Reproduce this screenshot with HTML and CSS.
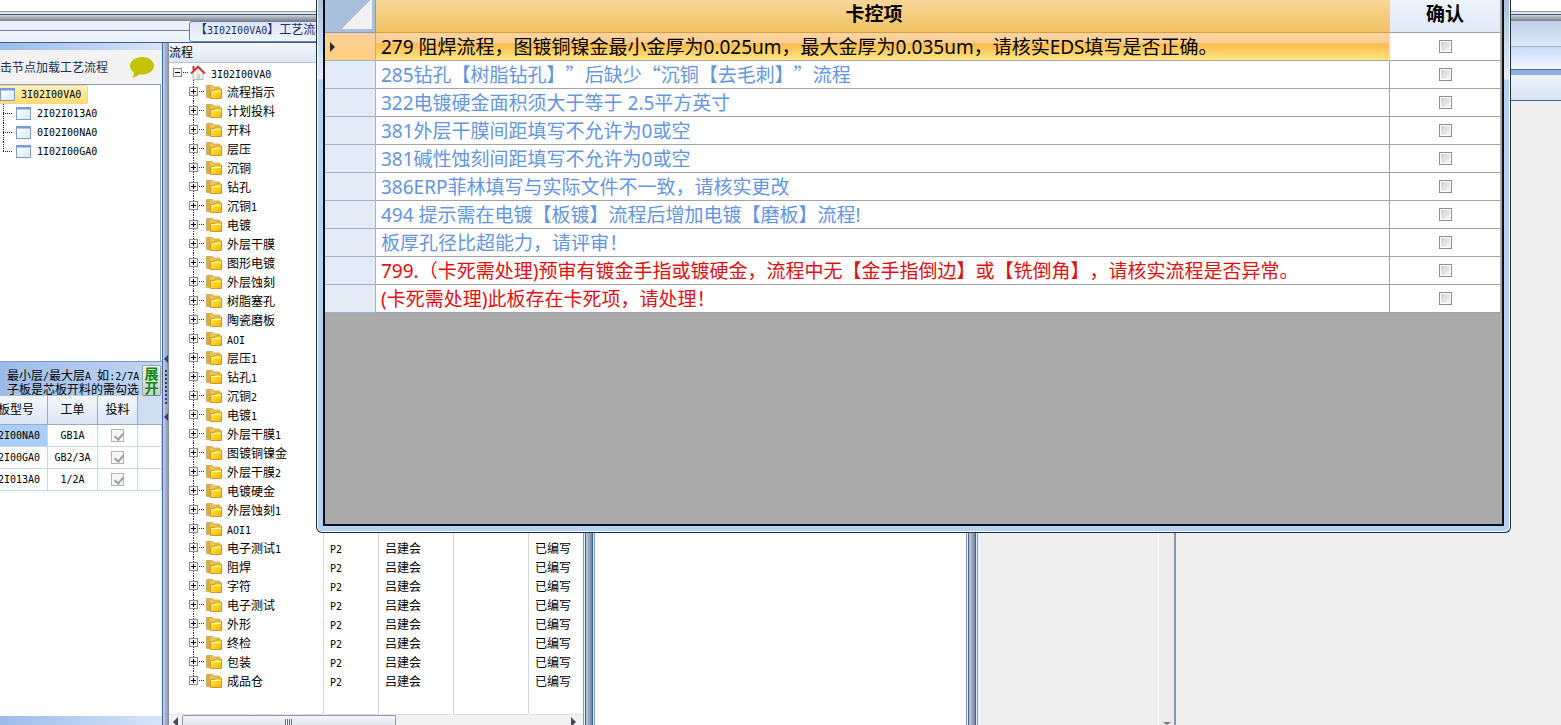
FILE: index.html
```html
<!DOCTYPE html>
<html lang="zh-CN">
<head>
    <meta charset="UTF-8">
    <meta name="viewport" content="width=device-width, initial-scale=1.0">
    <title>工艺流程</title>
    <link rel="stylesheet" href="styles.css">
</head>
<body>
    <svg class="sprites" aria-hidden="true">
        <defs>
            <linearGradient id="gold" x1="0" y1="0" x2="1" y2="1">
                <stop offset="0" stop-color="#fff04a"/>
                <stop offset="1" stop-color="#ffb400"/>
            </linearGradient>
            <linearGradient id="glass" x1="0" y1="0" x2="1" y2="1">
                <stop offset="0" stop-color="#ffffff"/>
                <stop offset="1" stop-color="#d8e8fa"/>
            </linearGradient>
        </defs>
        <symbol id="folder" viewBox="0 0 16 15">
            <path d="M.5 13.500V1.500h6l1 1.500h6V5" fill="#eec54c" stroke="#d0b060"/>
            <path d="M1 2h3v12H1z" fill="#d8ad45"/>
            <path d="M4.500 14.500v-8h4l1-1.500h6v9.500z" fill="url(#gold)" stroke="#c79a35"/>
            <path d="M5.500 7.500h9.500" stroke="#fff6b0"/>
        </symbol>
        <symbol id="window" viewBox="0 0 15 13">
            <rect x=".5" y=".5" width="14" height="12" fill="url(#glass)" stroke="#7d9dc8"/>
            <path d="M1 1h13v1.500H1z" fill="#6f9edb"/>
        </symbol>
        <symbol id="home" viewBox="0 0 16 15">
            <path d="M3 7l5-5 5 5v7.500H3z" fill="#f1f1f1" stroke="#b9b9b9"/>
            <path d="M7 9.500h3V14H7z" fill="#d0d0d8"/>
            <path d="M2.500 1h2v4h-2z" fill="#c03a3a"/>
            <path d="M1 8.500L8 1.800l7 6.700" fill="none" stroke="#d2383f" stroke-width="2.200"/>
        </symbol>
    </svg>

    <div class="app">
        <div class="title-bar"></div>
        <div class="workspace">
            <div class="main">
                <div class="tabs">
                    <a class="tab" href="#flow">【<span class="mono">3I02I00VA0</span>】工艺流程</a>
                </div>
                <div class="panels">
                    <div class="left">
                        <div class="strip"></div>
                        <div class="hint">
                            <span>击节点加载工艺流程</span>
                            <svg class="bubble" viewBox="0 0 24 21">
                                <path d="M12 0C5 0 0 4 0 9c0 3 1.500 5 4 6.500C4 18 3 19.500 2 20.500 5 20.500 8 19 9 17.500h3c7 0 12-4 12-8.700S19 0 12 0z" fill="#c4c300"/>
                            </svg>
                        </div>
                        <div class="boards">
                            <div class="board selected"><svg class="win"><use href="#window"/></svg><span class="mono">3I02I00VA0</span></div>
                            <div class="board child"><svg class="win"><use href="#window"/></svg><span class="mono">2I02I013A0</span></div>
                            <div class="board child"><svg class="win"><use href="#window"/></svg><span class="mono">0I02I00NA0</span></div>
                            <div class="board child last"><svg class="win"><use href="#window"/></svg><span class="mono">1I02I00GA0</span></div>
                        </div>
                        <div class="layer-head">
                            <p>最小层<span class="mono">/</span>最大层<span class="mono">A </span>如<span class="mono">:2/7A</span><br>子板是芯板开料的需勾选</p>
                            <button class="expand" type="button">展开</button>
                        </div>
                        <table class="orders">
                            <thead>
                                <tr><th class="c-model">板型号</th><th class="c-order">工单</th><th class="c-feed">投料</th><th></th></tr>
                            </thead>
                            <tbody>
                                <tr><td class="model current">2I00NA0</td><td>GB1A</td><td><input type="checkbox" class="tick" aria-label="投料 GB1A" checked disabled></td><td></td></tr>
                                <tr><td class="model">2I00GA0</td><td>GB2/3A</td><td><input type="checkbox" class="tick" aria-label="投料 GB2/3A" checked disabled></td><td></td></tr>
                                <tr><td class="model">2I013A0</td><td>1/2A</td><td><input type="checkbox" class="tick" aria-label="投料 1/2A" checked disabled></td><td></td></tr>
                            </tbody>
                        </table>
                        <div class="left-fill"></div>
                        <div class="strip foot"></div>
                    </div>

                    <div class="splitter grip">
                        <span class="arrow"></span>
                        <span class="dots"></span>
                        <span class="arrow"></span>
                    </div>

                    <div class="flow" id="flow">
                        <table class="steps">
                            <thead>
                                <tr><th class="c-name">流程</th><th class="c-ver"></th><th class="c-user"></th><th class="c-user"></th><th></th></tr>
                            </thead>
                            <tbody id="steps"></tbody>
                        </table>
                        <div class="hscroll">
                            <span class="tri-left"></span>
                            <span class="thumb"></span>
                            <span class="tri-right"></span>
                        </div>
                    </div>

                    <div class="splitter wide"></div>
                    <div class="detail"></div>
                    <div class="splitter wide"></div>
                    <div class="props"></div>
                    <div class="vscroll"><span class="tri-down"></span></div>
                </div>
            </div>
            <div class="right">
                <div class="band band-a"></div>
                <div class="band band-b"></div>
                <div class="band band-c"></div>
                <div class="band band-d"></div>
            </div>
        </div>
    </div>

    <div class="dialog">
        <div class="sheet">
            <table class="checks">
                <thead>
                    <tr><th class="corner"></th><th class="item">卡控项</th><th class="ok">确认</th></tr>
                </thead>
                <tbody>
                    <tr class="active"><td class="row-head"><span class="pointer"></span></td><td>279 阻焊流程，图镀铜镍金最小金厚为0.025um，最大金厚为0.035um，请核实EDS填写是否正确。</td><td class="ok"><input type="checkbox" class="box" aria-label="确认 279"></td></tr>
                    <tr><td class="row-head"></td><td>285钻孔【树脂钻孔】<span class="cjk">”</span>后缺少<span class="cjk">“</span>沉铜【去毛刺】<span class="cjk">”</span>流程</td><td class="ok"><input type="checkbox" class="box" aria-label="确认 285"></td></tr>
                    <tr><td class="row-head"></td><td>322电镀硬金面积须大于等于 2.5平方英寸</td><td class="ok"><input type="checkbox" class="box" aria-label="确认 322"></td></tr>
                    <tr><td class="row-head"></td><td>381外层干膜间距填写不允许为0或空</td><td class="ok"><input type="checkbox" class="box" aria-label="确认 381 外层干膜"></td></tr>
                    <tr><td class="row-head"></td><td>381碱性蚀刻间距填写不允许为0或空</td><td class="ok"><input type="checkbox" class="box" aria-label="确认 381 碱性蚀刻"></td></tr>
                    <tr><td class="row-head"></td><td>386ERP菲林填写与实际文件不一致，请核实更改</td><td class="ok"><input type="checkbox" class="box" aria-label="确认 386"></td></tr>
                    <tr><td class="row-head"></td><td>494 提示需在电镀【板镀】流程后增加电镀【磨板】流程!</td><td class="ok"><input type="checkbox" class="box" aria-label="确认 494"></td></tr>
                    <tr><td class="row-head"></td><td>板厚孔径比超能力，请评审！</td><td class="ok"><input type="checkbox" class="box" aria-label="确认 板厚孔径比"></td></tr>
                    <tr class="block"><td class="row-head"></td><td>799.（卡死需处理)预审有镀金手指或镀硬金，流程中无【金手指倒边】或【铣倒角】，请核实流程是否异常。</td><td class="ok"><input type="checkbox" class="box" aria-label="确认 799"></td></tr>
                    <tr class="block"><td class="row-head"></td><td>(卡死需处理)此板存在卡死项，请处理！</td><td class="ok"><input type="checkbox" class="box" aria-label="确认 卡死项"></td></tr>
                </tbody>
            </table>
        </div>
    </div>

    <script src="script.js"></script>
</body>
</html>
```
FILE: styles.css
```css
* {
    box-sizing: border-box;
}

body {
    margin: 0;
    overflow: hidden;
    background-color: #efefef;
    font-family: "Noto Sans CJK SC", sans-serif;
    font-size: 12px;
    line-height: 14px;
    text-spacing-trim: space-all;
    color: #000;
}

table {
    width: 100%;
    border-collapse: separate;
    border-spacing: 0;
    table-layout: fixed;
}

th, td {
    padding: 0;
    font-weight: normal;
    text-align: left;
}

p {
    margin: 0;
}

.mono {
    font-family: "DejaVu Sans Mono", monospace;
    font-size: 10px;
    line-height: 10px;
}

.sprites {
    position: absolute;
    width: 0;
    height: 0;
}

/* main window */
.app {
    display: flex;
    flex-direction: column;
    height: 100vh;
}

.title-bar {
    flex: none;
    height: 21px;
    background: linear-gradient(#fff 11px, #8a9bb0 11px, #8a9bb0 12px, #e4ecf8 12px, #dbe4f2 14px, #4f5d75 14px, #4f5d75 15px, #cdd3da 15px, #79828e 21px);
}

.workspace {
    display: flex;
    flex: 1;
    min-height: 0;
}

.main {
    display: flex;
    flex-direction: column;
    width: 1176px;
    border-right: 2px solid #8098c0;
}

.tabs {
    flex: none;
    height: 21px;
    padding-left: 189px;
    background: linear-gradient(#eaf1fb 9px, #6b819f 9px, #6b819f 10px, #eef4fc 10px, #eaf1fa);
}

.tab {
    display: inline-block;
    height: 21px;
    padding: 0 6px 0 5px;
    border: 1px solid #6b819f;
    border-radius: 3px;
    background: linear-gradient(#dce6f4, #f0f5fc);
    color: #1c2f6b;
    text-decoration: none;
}

.panels {
    display: flex;
    flex: 1;
    min-height: 0;
    border-top: 1px solid #3c5f99;
}

/* left column */
.left {
    display: flex;
    flex-direction: column;
    flex: none;
    width: 163px;
    overflow: hidden;
    border-right: 1px solid #3f68a8;
    background-color: #fff;
}

.strip {
    flex: none;
    height: 7px;
    background: linear-gradient(90deg, #9dbce8, #d6e4f8);
}

.strip.foot {
    height: 9px;
}

.hint {
    display: flex;
    align-items: center;
    justify-content: space-between;
    flex: none;
    height: 34px;
    padding-right: 8px;
    background-color: #f2f2f2;
    color: #1d3058;
    white-space: nowrap;
}

.bubble {
    width: 24px;
    height: 21px;
}

.boards {
    flex: none;
    height: 277px;
    margin-right: 1px;
    border-top: 1px solid #8e9fc4;
    border-right: 1px solid #8e9fc4;
}

.board {
    display: flex;
    align-items: center;
    gap: 6px;
    height: 19px;
}

.board.selected {
    width: 88px;
    border: 1px solid #f3d68a;
    border-left: 0;
    border-radius: 0 2px 2px 0;
    background: linear-gradient(#fff1c0, #ffdc6e);
}

.board.child {
    padding-left: 3px;
    background: repeating-linear-gradient(#222 0 1px, #fff 1px 2px) 3px 0 / 1px 100% no-repeat;
}

.board.child.last {
    background-size: 1px 10px;
}

.board.child::before {
    content: "";
    width: 10px;
    height: 1px;
    margin-right: -3px;
    background: repeating-linear-gradient(90deg, #222 0 1px, #fff 1px 2px);
}

.win {
    flex: none;
    width: 15px;
    height: 13px;
}

.layer-head {
    display: flex;
    align-items: flex-end;
    gap: 2px;
    flex: none;
    height: 35px;
    padding-left: 7px;
    border-top: 1px solid #7f9cc8;
    background: linear-gradient(100deg, #9cbbe9, #c3d7f3);
    white-space: nowrap;
}

.layer-head p {
    width: 133px;
}

.expand {
    width: 19px;
    height: 31px;
    padding: 0 0 3px;
    border: 1px solid #9aa5a0;
    border-bottom-color: #7a8a80;
    border-radius: 2px;
    background: linear-gradient(#eef4ee, #c8d2cc);
    color: #0a8a12;
    font: bold 14px/14px "Noto Sans CJK SC", sans-serif;
    white-space: normal;
}

.orders {
    flex: none;
}

.orders th {
    height: 29px;
    padding-bottom: 3px;
    border-right: 1px solid #95acd0;
    border-bottom: 1px solid #95acd0;
    background: linear-gradient(#f4f8fd, #dce6f4);
    text-align: center;
}

.orders .c-model {
    width: 48px;
    text-indent: -15px;
}

.orders .c-order {
    width: 50px;
}

.orders .c-feed {
    width: 40px;
}

.orders th:last-child {
    border-right: 0;
    background: #cfddf0;
}

.orders td {
    height: 22px;
    border-right: 1px solid #c5d8f0;
    border-bottom: 1px solid #c5d8f0;
    font-family: "DejaVu Sans Mono", monospace;
    font-size: 10px;
    text-align: center;
}

.orders .model {
    text-align: left;
    text-indent: -2px;
}

.orders .current {
    background-color: #a9cdf5;
}

.tick, .box {
    display: block;
    appearance: none;
    width: 13px;
    height: 13px;
    margin: 0 auto;
    border: 1px solid #8e8f8f;
    background: linear-gradient(135deg, #cbcfd5, #f6f6f6) content-box;
    padding: 1px;
}

.tick {
    position: relative;
    border-color: #b4b4b4;
    background: #f6f6f6;
}

.tick::after {
    content: "";
    position: absolute;
    left: 4px;
    top: 1px;
    width: 4px;
    height: 7px;
    border: solid #a0a0a0;
    border-width: 0 2px 2px 0;
    transform: rotate(40deg);
}

.left-fill {
    flex: 1;
}

/* splitters */
.splitter {
    flex: none;
    background: linear-gradient(90deg, #c8d3e2, #7c8da6);
}

.grip {
    display: flex;
    flex-direction: column;
    align-items: center;
    justify-content: center;
    gap: 7px;
    width: 6px;
    padding-top: 7px;
}

.grip .arrow {
    border: 4px solid transparent;
    border-right-color: #26406e;
    border-left: 0;
}

.grip .dots {
    width: 2px;
    height: 36px;
    background: repeating-linear-gradient(#26406e 0 2px, transparent 2px 4px);
}

.splitter.wide {
    width: 12px;
    border: solid #7f9bc8;
    border-width: 0 1px;
    background: linear-gradient(90deg, #e6effa 1px, #3f5f95 1px, #3f5f95 2px, #c3ccd8 2px, #75859c 8px, #3f5f95 8px, #3f5f95 9px, #dfeaf8 9px);
}

/* process tree */
.flow {
    display: flex;
    flex-direction: column;
    flex: none;
    width: 414px;
    background-color: #fff;
}

.steps {
    flex: 1;
}

.steps th {
    height: 20px;
    padding-bottom: 2px;
    border-bottom: 1px solid #b4c3da;
    background: linear-gradient(#f3f7fd, #dde7f5);
}

.steps .c-name {
    width: 154px;
}

.steps .c-ver {
    width: 55px;
}

.steps .c-user {
    width: 75px;
}

.steps td {
    height: 19px;
    padding-left: 6px;
    border-left: 1px solid #d9d9d9;
    white-space: nowrap;
}

.steps td:first-child {
    padding-left: 20px;
    border-left: 0;
    background: repeating-linear-gradient(#333 0 1px, #fff 1px 2px) 24px 0 / 1px 100% no-repeat;
}

.steps .root td:first-child {
    padding-left: 4px;
    background-size: 1px 4px;
    background-position: 24px 100%;
}

.steps .end td:first-child {
    background-size: 1px 10px;
}

.steps .filler td {
    height: auto;
    background: none;
}

.node {
    display: flex;
    align-items: center;
}

.node svg {
    flex: none;
    width: 16px;
    height: 15px;
    margin-right: 5px;
}

.toggle {
    flex: none;
    width: 9px;
    height: 9px;
    padding: 0;
    border: 1px solid #8c8c8c;
    background: linear-gradient(#000, #000) center / 5px 1px no-repeat, linear-gradient(#000, #000) center / 1px 5px no-repeat, #f4f4f4;
}

.toggle.open {
    background: linear-gradient(#000, #000) center / 5px 1px no-repeat, #f4f4f4;
}

.link {
    width: 6px;
    height: 1px;
    margin-right: 2px;
    background: repeating-linear-gradient(90deg, #fff 0 1px, #333 1px 2px);
}

.hscroll {
    display: flex;
    flex: none;
    height: 11px;
    padding: 0 7px 0 4px;
    border-top: 1px solid #e3e3e3;
    background-color: #f2f2f2;
}

.tri-left, .tri-right {
    margin-top: 2px;
    border: 5px solid transparent;
}

.tri-left {
    border-left: 0;
    border-right-color: #444b57;
}

.tri-right {
    margin-left: auto;
    border-right: 0;
    border-left-color: #444b57;
}

.thumb {
    width: 214px;
    height: 10px;
    margin-left: 4px;
    border: 1px solid #9197a3;
    border-bottom: 0;
    border-radius: 2px 2px 0 0;
    background: repeating-linear-gradient(90deg, #666e7a 0 1px, #eef1f5 1px 2px) center 3px / 8px 7px no-repeat, linear-gradient(#f4f6f9, #e3e7ee);
}

.detail {
    flex: 1;
    background-color: #fff;
}

.props {
    flex: none;
    width: 180px;
    background-color: #efefef;
}

.vscroll {
    display: flex;
    align-items: flex-end;
    justify-content: center;
    flex: none;
    width: 16px;
    border-left: 1px solid #fff;
    background-color: #ececec;
}

.tri-down {
    border: solid transparent;
    border-width: 3px 4px 0;
    border-top-color: #777;
}

/* area to the right of the panels */
.right {
    flex: 1;
    background-color: #efefef;
}

.band-a {
    height: 26px;
    border-bottom: 1px solid #a3b3c8;
    background: linear-gradient(#bfd0e8, #dde8f6);
}

.band-b {
    height: 23px;
    border-bottom: 1px solid #4d6fa6;
    background: linear-gradient(#c9dbf8, #f0f6ff);
}

.band-c {
    height: 5px;
    background-color: #90b0e2;
}

.band-d {
    height: 26px;
    border-bottom: 1px solid #4a6791;
    background: linear-gradient(#edf4fd, #d8e4f1);
}

/* check dialog */
.dialog {
    position: absolute;
    top: 0;
    left: 316px;
    right: 50px;
    padding: 0 6px 6px;
    border: 1px solid #1c2f40;
    border-top: 0;
    border-radius: 0 0 6px 6px;
    background: linear-gradient(#a9c2de, #e4eefa 79px, #b4d3f3 80px, #b4d2f2);
    box-shadow: inset 1px 0 #f3fbff, inset -1px -1px #f3fbff;
}

.sheet {
    min-height: 526px;
    padding-right: 2px;
    border: 2px solid #0a0f18;
    border-top: 0;
    background-color: #ababab;
}

.checks {
    font-family: "Noto Sans", "Noto Sans CJK SC", sans-serif;
    font-size: 19px;
    line-height: 26px;
}

.cjk {
    font-family: "Noto Sans CJK SC", sans-serif;
}

.checks th {
    height: 33px;
    padding-bottom: 4px;
    font-weight: bold;
    text-align: center;
}

.checks .corner {
    width: 51px;
    border: 1px solid #7f9dc0;
    border-width: 0 1px 1px 0;
    background: linear-gradient(135deg, transparent 50%, #f1f1f1 50%) 15px 0 / 32px 29px no-repeat, #a9bfdb;
}

.checks .item {
    padding-right: 18px;
    border-bottom: 1px solid #e09c3a;
    background: linear-gradient(#f8d79b, #f1c260);
}

.checks th.ok {
    width: 110px;
    border-bottom: 1px solid #94a3b8;
    background: linear-gradient(#eef4fc, #dfe9f6);
}

.checks td {
    height: 28px;
    padding-left: 5px;
    overflow: hidden;
    border-right: 1px solid #a0a5ac;
    border-bottom: 1px solid #a0a5ac;
    background-color: #fff;
    color: #6495dd;
    white-space: nowrap;
}

.checks .row-head {
    border-color: #9db2cc;
    background-color: #e3ebf7;
}

.checks td.ok {
    padding-left: 0;
    border-right: 0;
}

.checks .active td:nth-child(2) {
    border-right-color: #ffe07a;
    background: linear-gradient(#fbd5a2 0, #f9cd92 36%, #fdbb4c 40%, #ffe583);
    color: #000;
}

.checks .active .row-head {
    background: linear-gradient(#fdd09a, #ffcf80);
}

.pointer {
    display: block;
    width: 0;
    border: 5px solid transparent;
    border-left-color: #222b3a;
    border-right: 0;
}

.checks .block td {
    color: #e01010;
}
```
FILE: script.js
```javascript
const pending = ['流程指示', '计划投料', '开料', '层压', '沉铜', '钻孔', '沉铜1', '电镀', '外层干膜', '图形电镀',
    '外层蚀刻', '树脂塞孔', '陶瓷磨板', 'AOI', '层压1', '钻孔1', '沉铜2', '电镀1', '外层干膜1', '图镀铜镍金',
    '外层干膜2', '电镀硬金', '外层蚀刻1', 'AOI1'];
const written = ['电子测试1', '阻焊', '字符', '电子测试', '外形', '终检', '包装', '成品仓'];

// latin parts are set in the monospace face
const label = (text) => text.replace(/[A-Z0-9]+/g, '<span class="mono">$&</span>');

const node = (text, icon, open) =>
    `<div class="node"><button type="button" class="toggle${open ? ' open' : ''}" aria-label="${text}"></button>` +
    `<span class="link"></span><svg><use href="#${icon}"/></svg><span>${label(text)}</span></div>`;

const row = (cls, cells) => `<tr class="${cls}">${cells.map((cell) => `<td>${cell}</td>`).join('')}</tr>`;

let rows = row('root', [node('3I02I00VA0', 'home', true), '', '', '', '']);
pending.forEach((step) => {
    rows += row('step', [node(step, 'folder'), '', '', '', '']);
});
written.forEach((step, i) => {
    const cls = i === written.length - 1 ? 'step end' : 'step';
    rows += row(cls, [node(step, 'folder'), label('P2'), '吕建会', '', '已编写']);
});
rows += row('filler', ['', '', '', '', '']);

document.getElementById('steps').innerHTML = rows;
```
